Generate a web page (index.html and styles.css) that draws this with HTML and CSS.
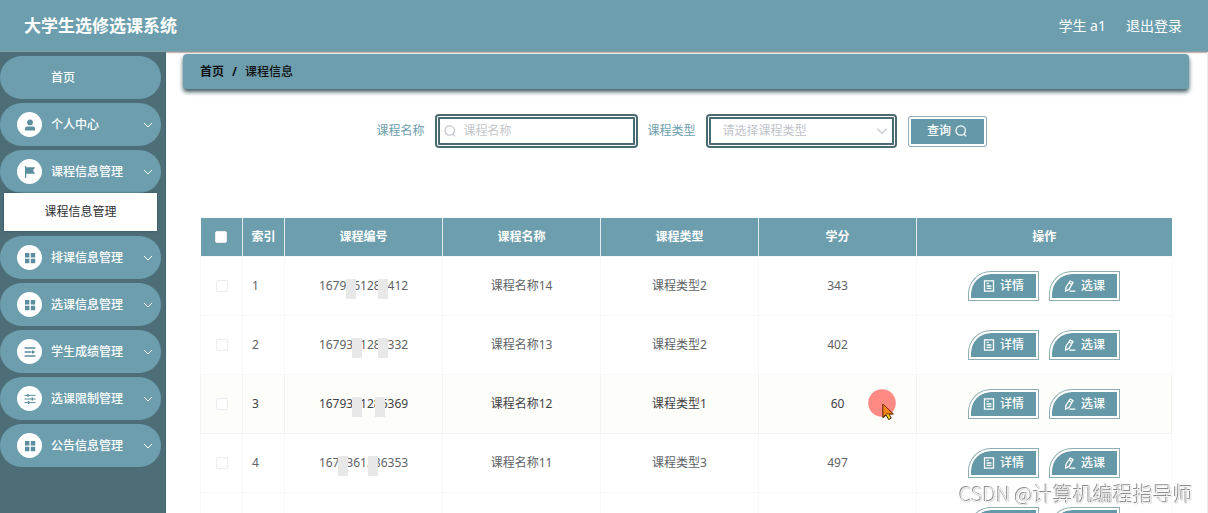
FILE: index.html
```html
<!DOCTYPE html>
<html lang="zh-CN">
<head>
<meta charset="utf-8">
<title>大学生选修选课系统</title>
<link rel="stylesheet" href="styles.css">
</head>
<body>
<svg class="sprite" aria-hidden="true">
  <symbol id="down" viewBox="0 0 10 10"><path d="M1 3l4 4 4-4" fill="none" stroke="currentColor"/></symbol>
  <symbol id="user" viewBox="0 0 12 12"><circle cx="6" cy="3.4" r="2.9" fill="currentColor"/><path d="M1 11.4V9.6Q1 7.4 3.2 7.4h5.6q2.2 0 2.2 2.2v1.8z" fill="currentColor"/></symbol>
  <symbol id="flag" viewBox="0 0 12 12"><path d="M1 0h1.2v1.2h9L9 4.4l2.2 3.4h-9V12H1z" fill="currentColor"/></symbol>
  <symbol id="grid" viewBox="0 0 12 12"><path d="M1 1h4.4v4.4H1zM6.8 1h4.4v4.4H6.8zM1 6.8h4.4v4.4H1zM6.8 6.8h4.4v4.4H6.8z" fill="currentColor"/></symbol>
  <symbol id="lines" viewBox="0 0 12 12"><path d="M.6 2h10.8M.6 6h7M.6 10h10.8" stroke="currentColor" stroke-width="1.5"/><path d="M8 4l3.2 2L8 8z" fill="currentColor"/></symbol>
  <symbol id="sliders" viewBox="0 0 12 12"><path d="M.4 2.4h11.2M.4 6h11.2M.4 9.6h11.2" stroke="currentColor" stroke-width="1"/><path d="M3.2 1h1.5v2.8H3.2zM7.6 4.6h1.5v2.8H7.6zM3.8 8.2h1.5V11H3.8z" fill="currentColor"/></symbol>
  <symbol id="search" viewBox="0 0 12 12"><circle cx="5.7" cy="5.5" r="4.7" fill="none" stroke="currentColor" stroke-width="1.2"/><path d="M9 9l2 2.4" stroke="currentColor" stroke-width="1.2"/></symbol>
  <symbol id="doc" viewBox="0 0 12 12"><path d="M1.5.8h9v10.4h-9zM3.6 3.4h2.2M3.6 6h4.8M3.6 8.4h4.8" fill="none" stroke="currentColor" stroke-width="1.3"/></symbol>
  <symbol id="edit" viewBox="0 0 12 12"><path d="M6.2 1L9 2.6 5 9.4 1.6 11l.3-3.6zM5.2 3l2.6 1.5M5.4 11.2h6" fill="none" stroke="currentColor" stroke-width="1.3"/></symbol>
</svg>
<div class="app">
  <header class="topbar">
    <h1 class="brand">大学生选修选课系统</h1>
    <div class="account"><span>学生 a1</span><a class="logout" href="#">退出登录</a></div>
  </header>
  <div class="body">
    <nav class="sidebar">
      <button class="item"><span class="blank"></span><span class="label">首页</span></button>
      <button class="item"><span class="badge"><svg><use href="#user"/></svg></span><span class="label">个人中心</span><svg class="arrow"><use href="#down"/></svg></button>
      <div class="group">
        <button class="item"><span class="badge"><svg><use href="#flag"/></svg></span><span class="label">课程信息管理</span><svg class="arrow"><use href="#down"/></svg></button>
        <a class="sub" href="#">课程信息管理</a>
      </div>
      <button class="item"><span class="badge"><svg><use href="#grid"/></svg></span><span class="label">排课信息管理</span><svg class="arrow"><use href="#down"/></svg></button>
      <button class="item"><span class="badge"><svg><use href="#grid"/></svg></span><span class="label">选课信息管理</span><svg class="arrow"><use href="#down"/></svg></button>
      <button class="item"><span class="badge"><svg><use href="#lines"/></svg></span><span class="label">学生成绩管理</span><svg class="arrow"><use href="#down"/></svg></button>
      <button class="item"><span class="badge"><svg><use href="#sliders"/></svg></span><span class="label">选课限制管理</span><svg class="arrow"><use href="#down"/></svg></button>
      <button class="item"><span class="badge"><svg><use href="#grid"/></svg></span><span class="label">公告信息管理</span><svg class="arrow"><use href="#down"/></svg></button>
    </nav>
    <main class="main">
      <div class="crumbs"><b>首页</b><b>/</b><span>课程信息</span></div>
      <form class="filters">
        <label for="name">课程名称</label>
        <div class="field name-field"><svg><use href="#search"/></svg><input id="name" type="text" placeholder="课程名称"></div>
        <label for="kind">课程类型</label>
        <div class="field kind-field"><select id="kind"><option>请选择课程类型</option></select><svg><use href="#down"/></svg></div>
        <button class="query" type="button">查询<svg><use href="#search"/></svg></button>
      </form>
      <table class="grid">
        <colgroup><col class="c-check"><col class="c-index"><col class="c-data"><col class="c-data"><col class="c-data"><col class="c-data"><col class="c-ops"></colgroup>
        <thead>
          <tr><th><input type="checkbox" aria-label="全选"></th><th>索引</th><th>课程编号</th><th>课程名称</th><th>课程类型</th><th>学分</th><th>操作</th></tr>
        </thead>
        <tbody>
          <tr><td><input type="checkbox" aria-label="选择 1"></td><td class="index">1</td><td><span class="code">1679361286412<i class="mask m1"></i><i class="mask m5"></i></span></td><td>课程名称14</td><td>课程类型2</td><td>343</td><td><div class="ops"><button><svg><use href="#doc"/></svg>详情</button><button><svg><use href="#edit"/></svg>选课</button></div></td></tr>
          <tr><td><input type="checkbox" aria-label="选择 2"></td><td class="index">2</td><td><span class="code">1679361286332<i class="mask m2"></i><i class="mask m5"></i></span></td><td>课程名称13</td><td>课程类型2</td><td>402</td><td><div class="ops"><button><svg><use href="#doc"/></svg>详情</button><button><svg><use href="#edit"/></svg>选课</button></div></td></tr>
          <tr class="hover"><td><input type="checkbox" aria-label="选择 3"></td><td class="index">3</td><td><span class="code">1679361286369<i class="mask m2"></i><i class="mask m4"></i></span></td><td>课程名称12</td><td>课程类型1</td><td>60</td><td><div class="ops"><button><svg><use href="#doc"/></svg>详情</button><button><svg><use href="#edit"/></svg>选课</button></div></td></tr>
          <tr><td><input type="checkbox" aria-label="选择 4"></td><td class="index">4</td><td><span class="code">1679361286353<i class="mask m0"></i><i class="mask m3"></i></span></td><td>课程名称11</td><td>课程类型3</td><td>497</td><td><div class="ops"><button><svg><use href="#doc"/></svg>详情</button><button><svg><use href="#edit"/></svg>选课</button></div></td></tr>
          <tr><td></td><td></td><td></td><td></td><td></td><td></td><td><div class="ops"><button aria-label="详情"></button><button aria-label="选课"></button></div></td></tr>
        </tbody>
      </table>
    </main>
  </div>
</div>
<svg class="pointer" viewBox="0 0 30 32" aria-hidden="true">
  <circle cx="14" cy="14" r="13.8" fill="#ff8a84"/>
  <path d="M15 15v14l3.2-3 2.4 4.6 2.6-1.4-2.2-4.2h4.4z" fill="#f5d51c" stroke="#3a2a10"/>
  <path d="M15 15v13l3.4-3.2h6.4z" fill="#f98618" stroke="#8a3208"/>
</svg>
<div class="watermark">CSDN @计算机编程指导师</div>
</body>
</html>
```
FILE: styles.css
```css
* { box-sizing: border-box; }
body {
  margin: 0;
  font: 12px/18px "Noto Sans", "Noto Sans CJK SC", sans-serif;
  color: #606266;
  background: #fff;
}
button, input, select { font: inherit; }
button { cursor: pointer; }
a { color: inherit; text-decoration: none; }
.sprite { display: none; }
.app { display: flex; flex-direction: column; height: 100vh; overflow: hidden; }

.topbar {
  flex: none;
  display: flex;
  align-items: center;
  justify-content: space-between;
  height: 52px;
  padding: 0 26px 0 24px;
  background: #6c9eae;
  color: #fff;
  border-bottom: 1px solid #86a0a6;
  box-shadow: 0 1px 1px #c9b5ac;
}
.brand { margin: 0; font-size: 17px; line-height: 24px; font-weight: 700; }
.account { display: flex; gap: 20px; font-size: 14px; line-height: 20px; }

.body { flex: 1; display: flex; min-height: 0; }
.sidebar {
  flex: none;
  display: flex;
  flex-direction: column;
  gap: 4px;
  width: 166px;
  padding: 4px 4px 0 0;
  background: #4d6e76;
  border-right: 1px solid #41666c;
}
.group { display: flex; flex-direction: column; margin-bottom: 1px; }
.item {
  flex: none;
  display: flex;
  align-items: center;
  gap: 9px;
  width: 100%;
  height: 43px;
  padding: 0 8px 0 17px;
  border: 0;
  border-radius: 22px;
  background: #6c9eae;
  color: #fff;
  font-weight: 500;
}
.badge, .blank { width: 25px; height: 25px; }
.badge { display: grid; place-items: center; border-radius: 50%; background: #fff; color: #5b8e9e; }
.badge svg { width: 12px; height: 12px; }
.label { flex: 1; text-align: left; }
.arrow { width: 10px; height: 10px; }
.sub {
  margin: 0 4px;
  padding: 10px 0;
  background: #fff;
  color: #303133;
  text-align: center;
  box-shadow: 0 0 2px #2f4d54;
}

.main { flex: 1; min-width: 0; padding: 2px 18px 0 17px; border-right: 1px solid #eceeec; }
.crumbs {
  display: flex;
  gap: 8px;
  padding: 9px 17px 8px;
  border-radius: 4px;
  background: #6c9eae;
  color: #111;
  font-weight: 500;
  box-shadow: 0 3px 4px #3f5d64;
}
.filters {
  display: flex;
  align-items: center;
  justify-content: center;
  gap: 10px;
  height: 34px;
  margin: 25px 10px 70px 0;
  color: #6c9eae;
}
.field {
  display: flex;
  align-items: center;
  height: 34px;
  border: 5px double #4b6b73;
  border-radius: 4px;
  color: #c0c4cc;
}
.name-field { width: 203px; padding-left: 4px; gap: 8px; }
.kind-field { width: 191px; padding: 0 4px 0 12px; }
.field svg { flex: none; width: 12px; height: 12px; }
.field input, .field select {
  flex: 1;
  min-width: 0;
  padding: 0;
  border: 0;
  outline: 0;
  background: none;
  color: #c0c4cc;
  appearance: none;
}
.field input::placeholder { color: #c4c6ca; }
.query, .ops button {
  display: flex;
  align-items: center;
  justify-content: center;
  gap: 4px;
  padding: 0;
  border: 2px solid #fff;
  background: #6699a8;
  background-clip: padding-box;
  color: #fff;
  font-weight: 500;
  box-shadow: 0 0 0 1px #8dadb2;
}
.query { width: 77px; height: 29px; margin-left: 2px; border-radius: 2px; }
.query svg, .ops svg { width: 12px; height: 12px; }

.grid { width: calc(100% - 34px); margin: 0 17px; border-collapse: collapse; table-layout: fixed; }
.c-check, .c-index { width: 42px; }
.c-data { width: 158px; }
.grid th {
  height: 38px;
  padding: 0;
  background: #6c9eae;
  color: #fff;
  font-weight: 700;
  border-right: 1px solid #e2ecee;
}
.grid th:last-child { border-right: 0; }
.grid td { height: 59px; padding: 0; border: 1px solid #f8f8f8; text-align: center; }
.grid .index { padding-left: 9px; text-align: left; }
.grid .hover td { background: #fdfdfa; color: #3f4144; border-color: #f3f3f1; }
.grid input {
  display: block;
  width: 12px;
  height: 12px;
  margin: 0 auto;
  border: 1px solid #ececec;
  border-radius: 2px;
  background: #fff;
  appearance: none;
}
.code { position: relative; }
.mask { position: absolute; top: 2px; width: 10px; height: 20px; background: #e8e8e8; }
.m0 { left: 19px; }
.m1 { left: 27px; }
.m2 { left: 33px; }
.m3 { left: 49px; }
.m4 { left: 56px; }
.m5 { left: 59px; }
.ops { display: flex; justify-content: center; gap: 12px; }
.ops button { width: 69px; height: 28px; gap: 5px; border-radius: 22px 0 0 0; }

.pointer { position: fixed; left: 868px; top: 389px; width: 30px; height: 32px; }
.watermark {
  position: fixed;
  right: 15px;
  bottom: 5px;
  font: 300 20px/28px "Noto Sans CJK SC", sans-serif;
  color: #f4f4f4;
  text-shadow: -1px -1px 0 #8d8d8d, 0 0 1px #777;
}
```
